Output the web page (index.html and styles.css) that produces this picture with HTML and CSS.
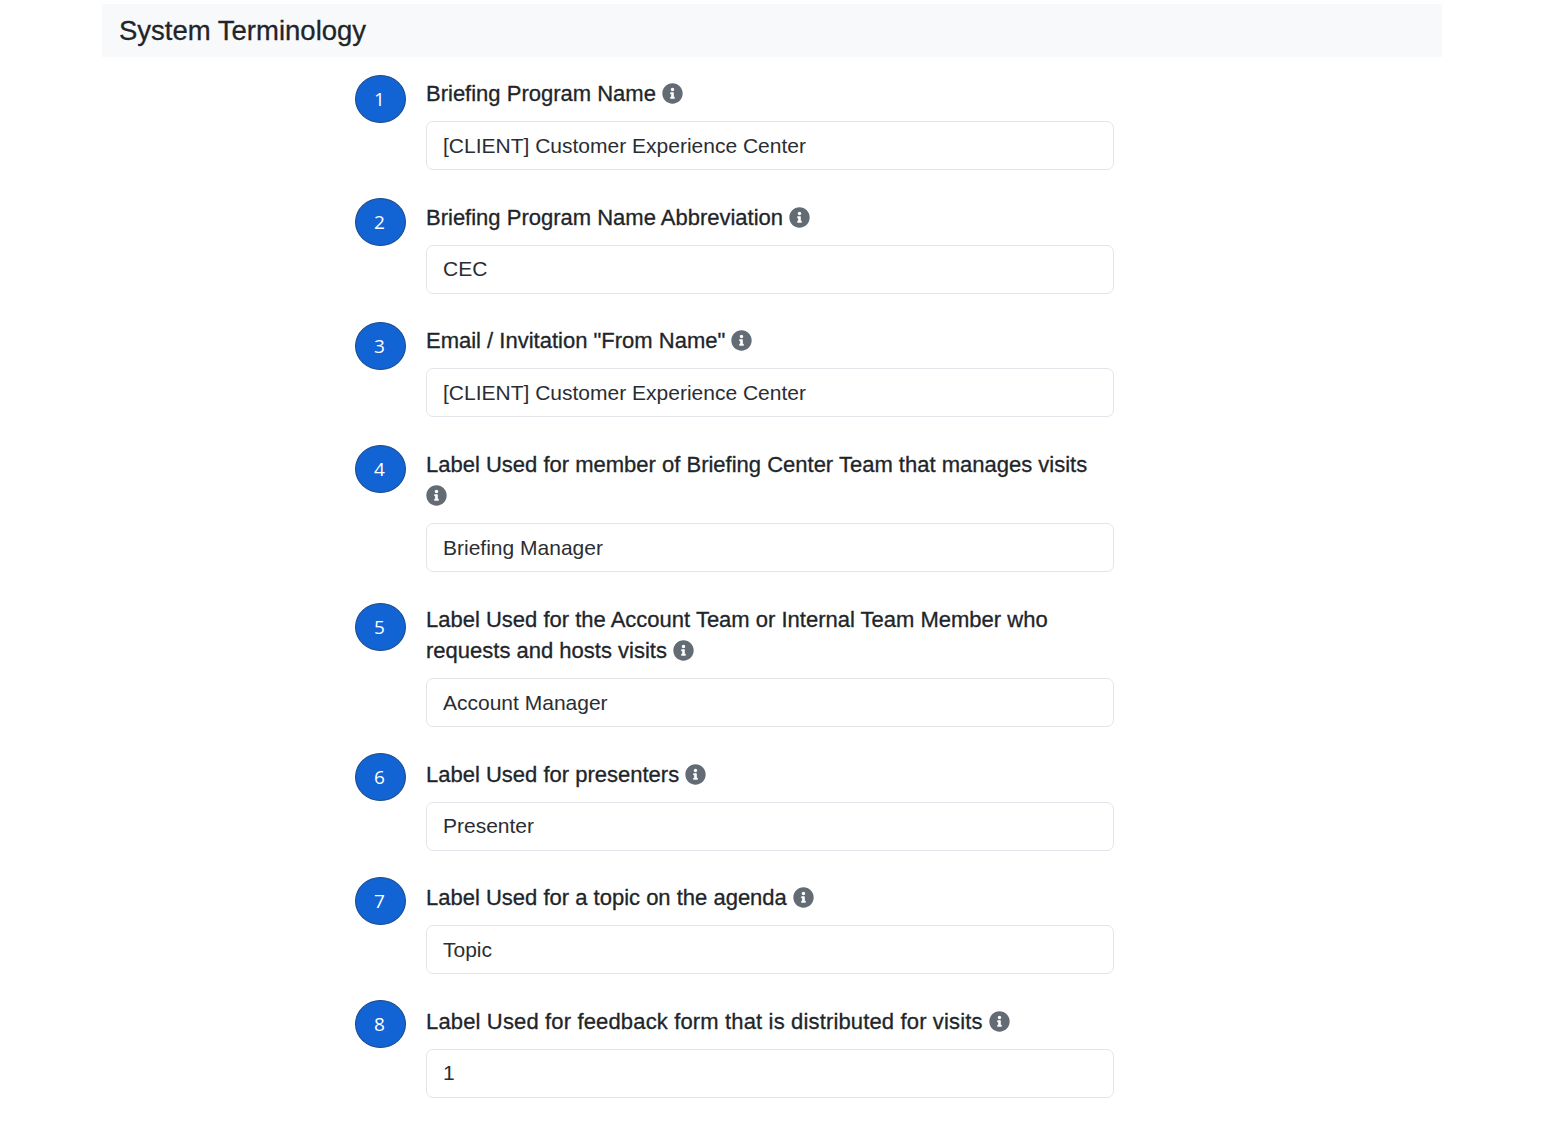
FILE: index.html
```html
<!DOCTYPE html>
<html lang="en">
<head>
<meta charset="utf-8">
<title>System Terminology</title>
<link rel="stylesheet" href="styles.css">
</head>
<body>
<svg class="sprite" width="0" height="0" aria-hidden="true">
  <symbol id="info" viewBox="0 0 512 512">
    <path d="M256 8C119 8 8 119 8 256s111 248 248 248 248-111 248-248S393 8 256 8zm0 110c23 0 42 19 42 42s-19 42-42 42-42-19-42-42 19-42 42-42zm56 254c0 7-5 12-12 12h-88c-7 0-12-5-12-12v-24c0-7 5-12 12-12h12v-64h-12c-7 0-12-5-12-12v-24c0-7 5-12 12-12h64c7 0 12 5 12 12v100h12c7 0 12 5 12 12v24z"/>
  </symbol>
</svg>
<main class="page">
  <h2 class="section-title">System Terminology</h2>
  <div class="rows">
    <div class="row">
      <span class="badge">1</span>
      <div class="field">
        <label class="label">Briefing Program Name <svg class="info"><use href="#info"/></svg></label>
        <input class="input" type="text" value="[CLIENT] Customer Experience Center">
      </div>
    </div>
    <div class="row">
      <span class="badge badge-up-1">2</span>
      <div class="field">
        <label class="label">Briefing Program Name Abbreviation <svg class="info"><use href="#info"/></svg></label>
        <input class="input" type="text" value="CEC">
      </div>
    </div>
    <div class="row">
      <span class="badge">3</span>
      <div class="field">
        <label class="label">Email / Invitation "From Name" <svg class="info"><use href="#info"/></svg></label>
        <input class="input" type="text" value="[CLIENT] Customer Experience Center">
      </div>
    </div>
    <div class="row">
      <span class="badge badge-up-1">4</span>
      <div class="field">
        <label class="label">Label Used for member of Briefing Center Team that manages visits <svg class="info"><use href="#info"/></svg></label>
        <input class="input" type="text" value="Briefing Manager">
      </div>
    </div>
    <div class="row">
      <span class="badge badge-down-2">5</span>
      <div class="field">
        <label class="label">Label Used for the Account Team or Internal Team Member who requests and hosts visits <svg class="info"><use href="#info"/></svg></label>
        <input class="input" type="text" value="Account Manager">
      </div>
    </div>
    <div class="row">
      <span class="badge badge-up-3">6</span>
      <div class="field">
        <label class="label">Label Used for presenters <svg class="info"><use href="#info"/></svg></label>
        <input class="input" type="text" value="Presenter">
      </div>
    </div>
    <div class="row">
      <span class="badge badge-up-2">7</span>
      <div class="field">
        <label class="label">Label Used for a topic on the agenda <svg class="info"><use href="#info"/></svg></label>
        <input class="input" type="text" value="Topic">
      </div>
    </div>
    <div class="row">
      <span class="badge badge-up-3">8</span>
      <div class="field">
        <label class="label label-wide">Label Used for feedback form that is distributed for visits <svg class="info"><use href="#info"/></svg></label>
        <input class="input" type="text" value="1">
      </div>
    </div>
  </div>
</main>
</body>
</html>
```
FILE: styles.css
```css
* { box-sizing: border-box; }
html, body { margin: 0; background: #fff; }
body {
  font-family: "Liberation Sans", Arial, sans-serif;
  color: #212529;
  height: 1142px;
  overflow: hidden;
}
.sprite { position: absolute; }
.page {
  width: 1340px;
  margin-left: 102px;
  padding-top: 4px;
}
.section-title {
  margin: 0;
  height: 53px;
  padding-left: 17px;
  background: #f8f9fb;
  font-size: 27.5px;
  font-weight: 400;
  line-height: 53px;
  -webkit-text-stroke: 0.3px #212529;
}
.rows {
  display: flex;
  flex-direction: column;
  gap: 28.5px;
  padding: 18px 0 0 253px;
}
.row {
  display: flex;
  align-items: flex-start;
  gap: 20px;
}
.badge {
  flex: none;
  width: 51px;
  height: 48px;
  border-radius: 50%;
  background: #1263d4;
  border: 1px solid #1b4a8c;
  color: #fff;
  font-family: "Open Sans", sans-serif;
  font-size: 19px;
  line-height: 46px;
  text-align: center;
  padding-right: 2px;
}
.badge-up-1 { margin-top: -1px; }
.badge-up-2 { margin-top: -2px; }
.badge-up-3 { margin-top: -3px; }
.badge-down-2 { margin-top: 2px; }
.field { width: 688px; }
.label {
  display: block;
  font-size: 22px;
  line-height: 31.5px;
  padding-top: 3px;
  margin-bottom: 11.5px;
  -webkit-text-stroke: 0.3px #212529;
}
.label-wide { letter-spacing: 0.15px; }
.info {
  width: 21px;
  height: 21px;
  fill: #636b75;
  vertical-align: -3px;
  stroke: none;
}
.input {
  display: block;
  width: 100%;
  height: 49px;
  padding: 0 16px;
  border: 1px solid #e2e5e9;
  border-radius: 7px;
  background: #fff;
  color: #2a2e33;
  font: 400 21px "Liberation Sans", Arial, sans-serif;
}
```
